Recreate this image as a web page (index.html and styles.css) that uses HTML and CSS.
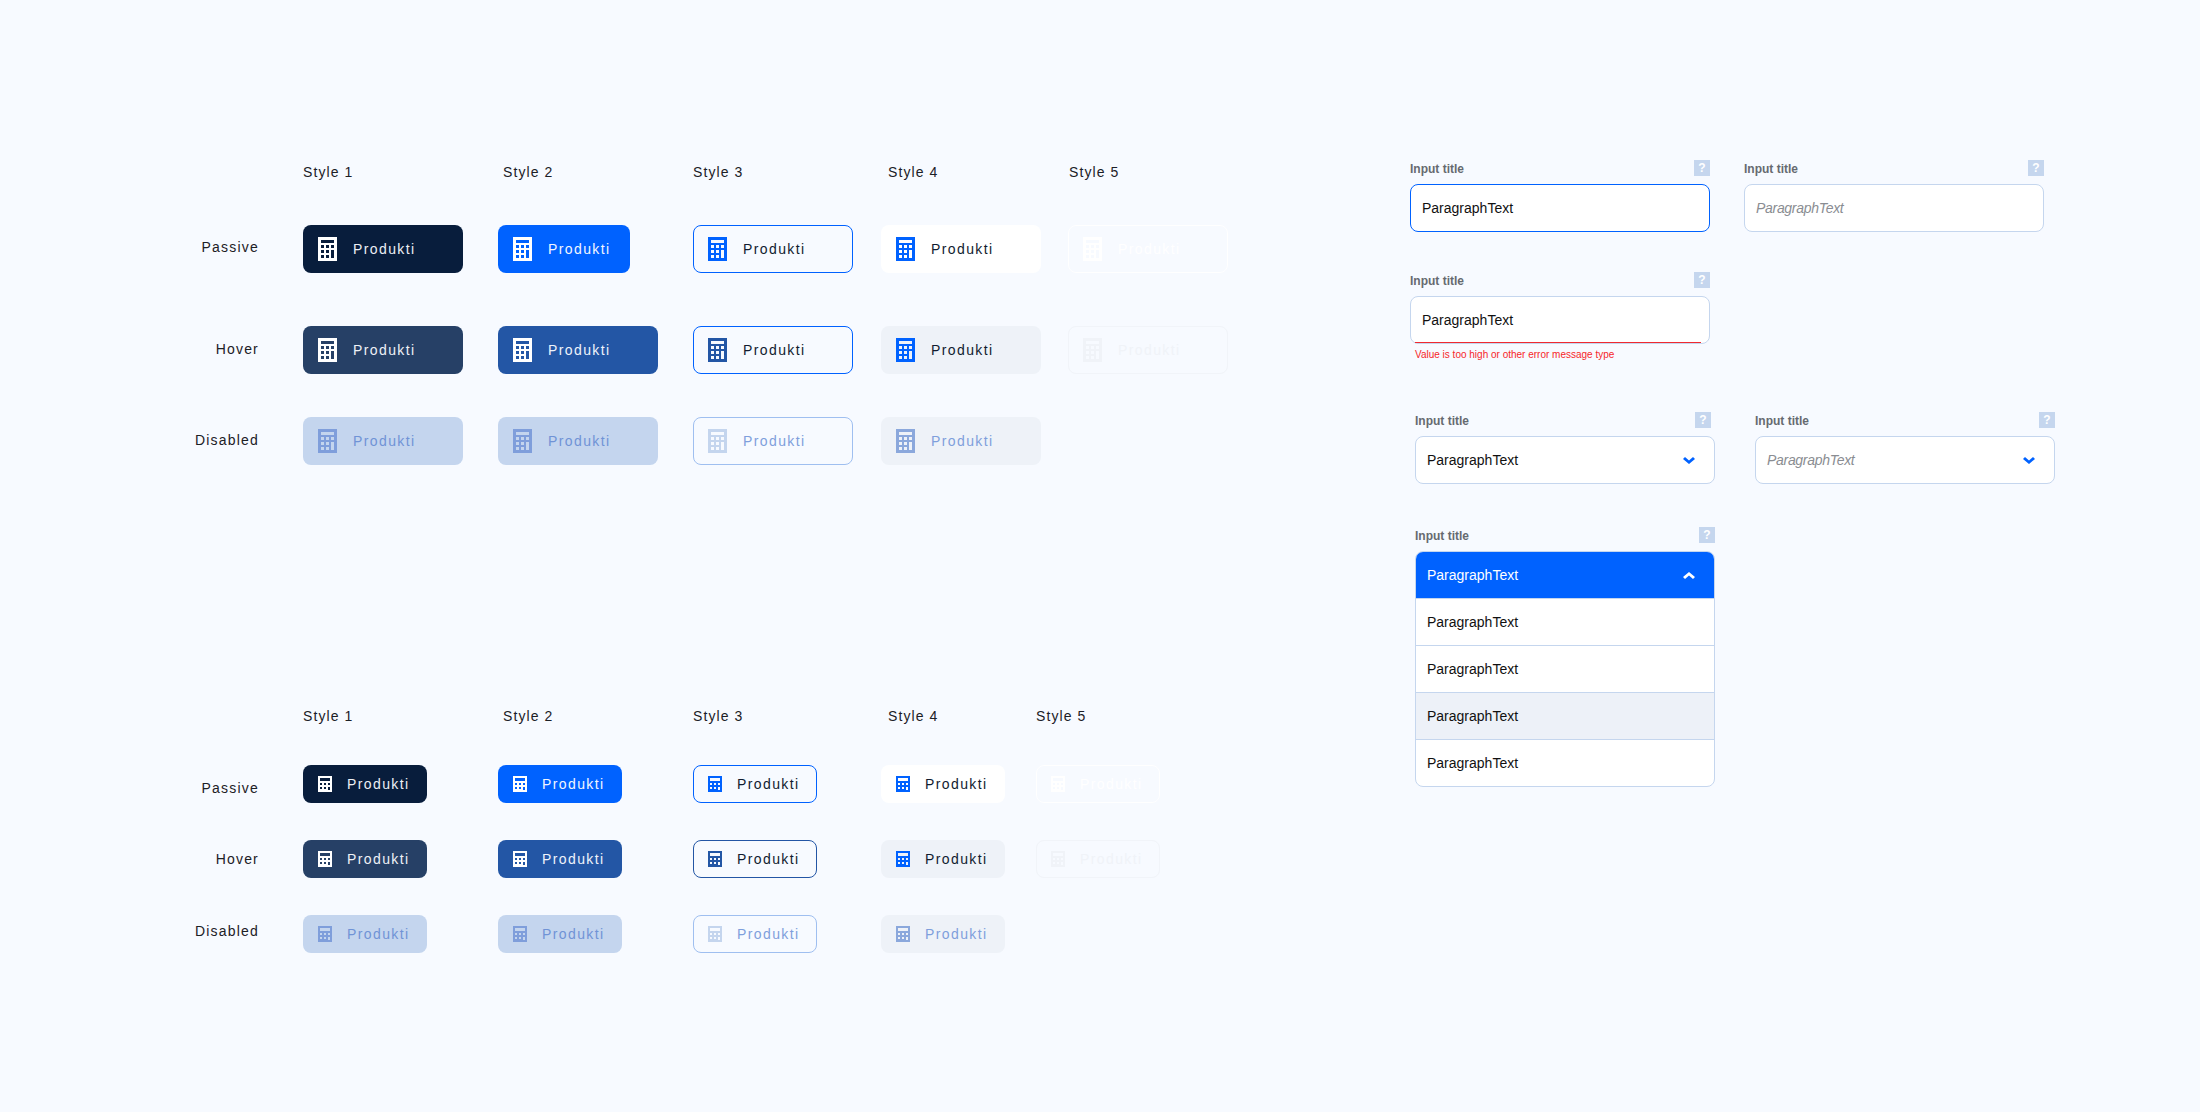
FILE: index.html
```html
<!DOCTYPE html>
<html lang="en">
<head>
<meta charset="utf-8">
<title>Buttons and inputs</title>
<link rel="stylesheet" href="styles.css">
</head>
<body>
<svg class="defs" width="0" height="0" aria-hidden="true">
  <symbol id="calc-l" viewBox="0 0 19 24"><path fill="currentColor" fill-rule="evenodd" d="M0 0h19v24H0zM3 3v3h13V3zM3 8v3h3V8zM8 8v3h3V8zM13 8v3h3V8zM3 13v3h3v-3zM8 13v3h3v-3zM13 13v8h3v-8zM3 18v3h3v-3zM8 18v3h3v-3z"/></symbol>
  <symbol id="calc-s" viewBox="0 0 14 16"><path fill="currentColor" fill-rule="evenodd" d="M0 0h14v16H0zM2 2v3h10V2zM2 7v2h2V7zM6 7v2h2V7zM10 7v2h2V7zM2 11v2h2v-2zM6 11v2h2v-2zM10 11v3h2v-3z"/></symbol>
  <symbol id="chev-d" viewBox="0 0 12 7"><path fill="currentColor" d="M0 2l2-2 4 3.4L10 0l2 2-6 5z"/></symbol>
  <symbol id="chev-u" viewBox="0 0 12 7"><path fill="currentColor" d="M0 5l2 2 4-3.4L10 7l2-2-6-5z"/></symbol>
</svg>
<main class="page">
  <div class="buttons">
    <section class="matrix matrix--large">
      <span></span>
      <div class="head">Style 1</div>
      <div class="head head--n5">Style 2</div>
      <div class="head">Style 3</div>
      <div class="head head--n7">Style 4</div>
      <div class="head head--n1">Style 5</div>

      <div class="row-label row-label--up4">Passive</div>
      <button class="btn s1"><svg class="ico"><use href="#calc-l"/></svg><span>Produkti</span></button>
      <button class="btn s2 btn--short"><svg class="ico"><use href="#calc-l"/></svg><span>Produkti</span></button>
      <button class="btn s3"><svg class="ico"><use href="#calc-l"/></svg><span>Produkti</span></button>
      <button class="btn s4"><svg class="ico"><use href="#calc-l"/></svg><span>Produkti</span></button>
      <button class="btn s5"><svg class="ico"><use href="#calc-l"/></svg><span>Produkti</span></button>

      <div class="row-label row-label--up2">Hover</div>
      <button class="btn s1-h"><svg class="ico"><use href="#calc-l"/></svg><span>Produkti</span></button>
      <button class="btn s2-h"><svg class="ico"><use href="#calc-l"/></svg><span>Produkti</span></button>
      <button class="btn s3-h"><svg class="ico"><use href="#calc-l"/></svg><span>Produkti</span></button>
      <button class="btn s4-h"><svg class="ico"><use href="#calc-l"/></svg><span>Produkti</span></button>
      <button class="btn s5-h"><svg class="ico"><use href="#calc-l"/></svg><span>Produkti</span></button>

      <div class="row-label row-label--up2">Disabled</div>
      <button class="btn s-d"><svg class="ico"><use href="#calc-l"/></svg><span>Produkti</span></button>
      <button class="btn s-d"><svg class="ico"><use href="#calc-l"/></svg><span>Produkti</span></button>
      <button class="btn s3-d"><svg class="ico"><use href="#calc-l"/></svg><span>Produkti</span></button>
      <button class="btn s4-d"><svg class="ico"><use href="#calc-l"/></svg><span>Produkti</span></button>
    </section>

    <section class="matrix matrix--small">
      <span></span>
      <div class="head">Style 1</div>
      <div class="head head--n5">Style 2</div>
      <div class="head">Style 3</div>
      <div class="head head--n7">Style 4</div>
      <div class="head">Style 5</div>

      <div class="row-label row-label--down8">Passive</div>
      <button class="btn s1"><svg class="ico"><use href="#calc-s"/></svg><span>Produkti</span></button>
      <button class="btn s2"><svg class="ico"><use href="#calc-s"/></svg><span>Produkti</span></button>
      <button class="btn s3"><svg class="ico"><use href="#calc-s"/></svg><span>Produkti</span></button>
      <button class="btn s4"><svg class="ico"><use href="#calc-s"/></svg><span>Produkti</span></button>
      <button class="btn s5"><svg class="ico"><use href="#calc-s"/></svg><span>Produkti</span></button>

      <div class="row-label">Hover</div>
      <button class="btn s1-h"><svg class="ico"><use href="#calc-s"/></svg><span>Produkti</span></button>
      <button class="btn s2-h"><svg class="ico"><use href="#calc-s"/></svg><span>Produkti</span></button>
      <button class="btn s3-h s3-h--dark"><svg class="ico"><use href="#calc-s"/></svg><span>Produkti</span></button>
      <button class="btn s4-h"><svg class="ico"><use href="#calc-s"/></svg><span>Produkti</span></button>
      <button class="btn s5-h"><svg class="ico"><use href="#calc-s"/></svg><span>Produkti</span></button>

      <div class="row-label row-label--up6">Disabled</div>
      <button class="btn s-d"><svg class="ico"><use href="#calc-s"/></svg><span>Produkti</span></button>
      <button class="btn s-d"><svg class="ico"><use href="#calc-s"/></svg><span>Produkti</span></button>
      <button class="btn s3-d"><svg class="ico"><use href="#calc-s"/></svg><span>Produkti</span></button>
      <button class="btn s4-d"><svg class="ico"><use href="#calc-s"/></svg><span>Produkti</span></button>
    </section>
  </div>

  <div class="forms">
    <div class="form-row">
      <div class="field">
        <div class="field-head"><label class="field-title">Input title</label><span class="help">?</span></div>
        <div class="box box--focus"><span class="val">ParagraphText</span></div>
      </div>
      <div class="field">
        <div class="field-head"><label class="field-title">Input title</label><span class="help">?</span></div>
        <div class="box"><span class="val val--ph">ParagraphText</span></div>
      </div>
    </div>

    <div class="form-row form-row--error">
      <div class="field">
        <div class="field-head"><label class="field-title">Input title</label><span class="help">?</span></div>
        <div class="box box--error"><span class="val">ParagraphText</span></div>
        <p class="error">Value is too high or other error message type</p>
      </div>
    </div>

    <div class="form-row form-row--selects">
      <div class="field">
        <div class="field-head field-head--inset"><label class="field-title">Input title</label><span class="help">?</span></div>
        <div class="box box--select"><span class="val">ParagraphText</span><svg class="chev"><use href="#chev-d"/></svg></div>
      </div>
      <div class="field">
        <div class="field-head"><label class="field-title">Input title</label><span class="help">?</span></div>
        <div class="box box--select"><span class="val val--ph">ParagraphText</span><svg class="chev"><use href="#chev-d"/></svg></div>
      </div>
    </div>

    <div class="form-row form-row--dropdown">
      <div class="field">
        <div class="field-head"><label class="field-title">Input title</label><span class="help">?</span></div>
        <div class="dropdown">
          <div class="dd-head"><span class="val val--on">ParagraphText</span><svg class="chev chev--on"><use href="#chev-u"/></svg></div>
          <div class="dd-item"><span class="val">ParagraphText</span></div>
          <div class="dd-item"><span class="val">ParagraphText</span></div>
          <div class="dd-item dd-item--hover"><span class="val">ParagraphText</span></div>
          <div class="dd-item"><span class="val">ParagraphText</span></div>
        </div>
      </div>
    </div>
  </div>
</main>
</body>
</html>
```

FILE: styles.css
```css
* { box-sizing: border-box; }
html, body { margin: 0; padding: 0; }
body {
  background: #f7faff;
  font-family: "Liberation Sans", Arial, sans-serif;
  color: #0b1a33;
  width: 2200px;
  height: 1112px;
  overflow: hidden;
}
.defs { position: absolute; }
.page { display: flex; padding-top: 160px; }

/* left: button matrices */
.buttons { width: 1410px; flex: none; }
.matrix { display: grid; align-items: start; }
.matrix--large {
  grid-template-columns: 303px 195px 195px 188px 187px 160px;
  grid-template-rows: 65px 101px 91px 48px;
}
.matrix--small {
  margin-top: 239px;
  grid-template-columns: 303px 195px 195px 188px 155px 124px;
  grid-template-rows: 61px 75px 75px 38px;
}
.head {
  height: 24px;
  line-height: 24px;
  font-size: 14px;
  letter-spacing: 1.1px;
  color: #1c2026;
}
.head--n1 { padding-left: 1px; }
.head--n5 { padding-left: 5px; }
.head--n7 { padding-left: 7px; }

.row-label {
  display: flex;
  align-items: center;
  justify-content: flex-end;
  padding-right: 44px;
  font-size: 14px;
  letter-spacing: 1.2px;
  color: #1c2026;
}
.matrix--large .row-label { height: 48px; }
.matrix--small .row-label { height: 38px; }
.row-label--up2 { padding-bottom: 2px; }
.row-label--up4 { padding-bottom: 4px; }
.row-label--up6 { padding-bottom: 6px; }
.row-label--down8 { padding-top: 8px; }

.btn {
  display: flex;
  align-items: center;
  margin: 0;
  padding: 0 0 0 14px;
  border: 1px solid transparent;
  border-radius: 8px;
  background: none;
  font-family: inherit;
  font-size: 14px;
  letter-spacing: 1.4px;
  text-align: left;
}
.matrix--large .btn { width: 160px; height: 48px; gap: 16px; }
.matrix--large .btn--short { width: 132px; }
.matrix--small .btn { width: 124px; height: 38px; gap: 15px; }
.ico { flex: none; display: block; color: inherit; }
.matrix--large .ico { width: 19px; height: 24px; }
.matrix--small .ico { width: 14px; height: 16px; }

.s1 { background: #081d3c; color: #eceff4; }
.s1 .ico { color: #fff; }
.s2 { background: #0062ff; color: #f2f6ff; }
.s2 .ico { color: #fff; }
.s3 { border-color: #0062ff; color: #111c30; }
.s3 .ico { color: #0062ff; }
.s4 { background: #fff; color: #111c30; }
.s4 .ico { color: #0062ff; }
.s5 { border-color: #fff; color: #fff; }

.s1-h { background: #264066; color: #eef1f6; }
.s1-h .ico { color: #fff; }
.s2-h { background: #2356a5; color: #eef3fb; }
.s2-h .ico { color: #fff; }
.s3-h { border-color: #0062ff; color: #111c30; }
.s3-h .ico { color: #2356a5; }
.s3-h--dark { border-color: #2356a5; }
.s4-h { background: #eef2f8; color: #111c30; }
.s4-h .ico { color: #0062ff; }
.s5-h { border-color: #f1f4f9; color: #f0f3f8; }

.s-d { background: #c4d5ee; color: #7093d6; }
.s-d .ico { color: #7f9edb; }
.s3-d { border-color: #9fbff0; color: #7f9fdc; }
.s3-d .ico { color: #c4d5ee; }
.s4-d { background: #eef2f8; color: #7f9fdc; }
.s4-d .ico { color: #8ba8dc; }

/* right: form fields */
.forms { flex: none; width: 660px; }
.form-row { display: flex; gap: 34px; }
.form-row--error { margin-top: 40px; }
.form-row--selects { margin-top: 50px; margin-left: 5px; gap: 40px; }
.form-row--dropdown { margin-top: 43px; margin-left: 5px; }
.field { width: 300px; }
.field-head {
  display: flex;
  justify-content: space-between;
  align-items: center;
  height: 16px;
  margin-bottom: 8px;
}
.field-head--inset { padding-right: 4px; }
.field-title {
  padding-top: 2px;
  font-size: 12px;
  font-weight: 700;
  color: #666a70;
}
.help {
  width: 16px;
  height: 16px;
  background: #c5d6ee;
  color: #fff;
  font-size: 12px;
  font-weight: 700;
  line-height: 16px;
  text-align: center;
}
.box {
  position: relative;
  display: flex;
  align-items: center;
  justify-content: space-between;
  height: 48px;
  padding: 0 19px 0 11px;
  background: #fff;
  border: 1px solid #c5d6ee;
  border-radius: 8px;
}
.box--focus { border-color: #0062ff; }
.box--error::after {
  content: "";
  position: absolute;
  left: 4px;
  right: 8px;
  bottom: 0;
  height: 1px;
  background: #f02a30;
}
.val { font-size: 14px; color: #111; }
.val--ph { font-style: italic; color: #8a8d92; letter-spacing: -0.3px; }
.val--on { color: #fff; }
.chev { display: block; width: 12px; height: 7px; color: #0062ff; flex: none; }
.chev--on { color: #fff; }
.error {
  margin: 4px 0 0 5px;
  font-size: 10px;
  line-height: 14px;
  color: #f6262a;
}
.dropdown {
  height: 236px;
  border: 1px solid #c5d6ee;
  border-radius: 8px;
  overflow: hidden;
  background: #fff;
}
.dd-head {
  display: flex;
  align-items: center;
  justify-content: space-between;
  height: 46px;
  padding: 0 19px 0 11px;
  background: #0062ff;
}
.dd-item {
  display: flex;
  align-items: center;
  height: 47px;
  padding-left: 11px;
  border-top: 1px solid #c5d6ee;
}
.dd-item--hover { background: #edf1f8; }
```
